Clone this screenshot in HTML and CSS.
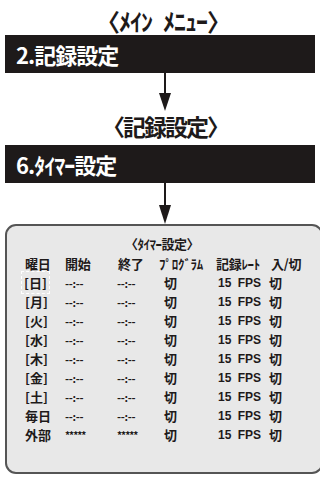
FILE: index.html
```html
<!DOCTYPE html>
<html>
<head>
    <title>タイマー設定</title>
    <link rel="stylesheet" href="styles.css">
</head>
<body>
    <div id="flow">
        <div class="screen-title">〈ﾒｲﾝ<span class="gap"></span>ﾒﾆｭｰ〉</div>
        <div class="menu-bar">2.記録設定</div>
        <div class="arrow">
            <svg width="14" height="38" viewBox="0 0 14 38">
                <rect x="6" y="0" width="2" height="22" fill="#1e1a1a"/>
                <polygon points="1,20 13,20 7,38" fill="#1e1a1a"/>
            </svg>
        </div>
        <div class="screen-title title-second">〈記録設定〉</div>
        <div class="menu-bar">6.ﾀｲﾏｰ設定</div>
        <div class="arrow">
            <svg width="14" height="41" viewBox="0 0 14 41">
                <rect x="6" y="0" width="2" height="24" fill="#1e1a1a"/>
                <polygon points="1,22 13,22 7,41" fill="#1e1a1a"/>
            </svg>
        </div>
        <div id="monitor">
            <div class="monitor-title">〈ﾀｲﾏｰ設定〉</div>
            <div class="timer-table">
                <div class="row head">
                    <span>曜日</span><span>開始</span><span class="end">終了</span><span>ﾌﾟﾛｸﾞﾗﾑ</span><span>記録ﾚｰﾄ</span><span class="onoff">入/切</span>
                </div>
                <div class="row">
                    <span><span class="cursor">[日]</span></span><span class="time">--:--</span><span class="time">--:--</span><span class="off">切</span><span class="fps">15 FPS</span><span class="off">切</span>
                </div>
                <div class="row">
                    <span>[月]</span><span class="time">--:--</span><span class="time">--:--</span><span class="off">切</span><span class="fps">15 FPS</span><span class="off">切</span>
                </div>
                <div class="row">
                    <span>[火]</span><span class="time">--:--</span><span class="time">--:--</span><span class="off">切</span><span class="fps">15 FPS</span><span class="off">切</span>
                </div>
                <div class="row">
                    <span>[水]</span><span class="time">--:--</span><span class="time">--:--</span><span class="off">切</span><span class="fps">15 FPS</span><span class="off">切</span>
                </div>
                <div class="row">
                    <span>[木]</span><span class="time">--:--</span><span class="time">--:--</span><span class="off">切</span><span class="fps">15 FPS</span><span class="off">切</span>
                </div>
                <div class="row">
                    <span>[金]</span><span class="time">--:--</span><span class="time">--:--</span><span class="off">切</span><span class="fps">15 FPS</span><span class="off">切</span>
                </div>
                <div class="row">
                    <span>[土]</span><span class="time">--:--</span><span class="time">--:--</span><span class="off">切</span><span class="fps">15 FPS</span><span class="off">切</span>
                </div>
                <div class="row">
                    <span>毎日</span><span class="time">--:--</span><span class="time">--:--</span><span class="off">切</span><span class="fps">15 FPS</span><span class="off">切</span>
                </div>
                <div class="row">
                    <span>外部</span><span class="time stars">*****</span><span class="time stars">*****</span><span class="off">切</span><span class="fps">15 FPS</span><span class="off">切</span>
                </div>
            </div>
        </div>
    </div>
</body>
</html>
```

FILE: styles.css
```css
body {
    margin: 0;
    padding: 0;
    background-color: #ffffff;
    color: #1e1a1a;
    font-family: "Noto Sans CJK JP", "Noto Sans", sans-serif;
    font-weight: bold;
    height: 477px;
    overflow: hidden;
}
#flow {
    display: flex;
    flex-direction: column;
    padding-top: 7px;
}
.screen-title {
    text-align: center;
    padding-left: 6px;
    font-size: 24px;
    line-height: 27px;
    letter-spacing: -1px;
}
.screen-title .gap {
    display: inline-block;
    width: 11px;
}
.title-second {
    font-size: 23px;
    letter-spacing: -2px;
    margin-top: 2px;
    margin-bottom: 4px;
    padding-left: 10px;
}
.menu-bar {
    background-color: #1e1a1a;
    color: #ffffff;
    margin: 1px 5px 0 5px;
    height: 38px;
    padding-left: 11px;
    font-size: 22px;
    letter-spacing: -1px;
    display: flex;
    align-items: center;
}
.arrow {
    display: flex;
    justify-content: center;
    padding-left: 10px;
}
.arrow svg {
    display: block;
}
#monitor {
    margin-left: 5px;
    width: 318px;
    height: 250px;
    background-color: #e8e8e8;
    border: 2px solid #555555;
    border-radius: 11px;
    box-sizing: border-box;
    padding-top: 9px;
}
.monitor-title {
    text-align: center;
    font-size: 13px;
    line-height: 18px;
    letter-spacing: -0.5px;
    padding-right: 4px;
}
.timer-table {
    display: flex;
    flex-direction: column;
    padding-left: 18px;
    font-size: 13px;
}
.row {
    display: grid;
    grid-template-columns: 40px 52px 42px 57px 51px 50px;
    height: 19px;
    align-items: center;
    white-space: nowrap;
}
.row.head {
    height: 20px;
    letter-spacing: -0.3px;
}
.row.head .end {
    padding-left: 1px;
}
.row.head .onoff {
    padding-left: 4px;
}
.off {
    padding-left: 5px;
}
.off:last-child {
    padding-left: 2px;
}
.time {
    font-size: 11px;
    letter-spacing: -0.3px;
}
.stars {
    font-size: 10px;
    letter-spacing: -1px;
}
.fps {
    padding-left: 2px;
    font-family: "Liberation Sans", Arial, sans-serif;
    font-size: 12px;
    word-spacing: 3px;
}
.cursor {
    border: 1px dashed #ffffff;
    margin-left: -4px;
    padding: 1px 2px;
}
```
